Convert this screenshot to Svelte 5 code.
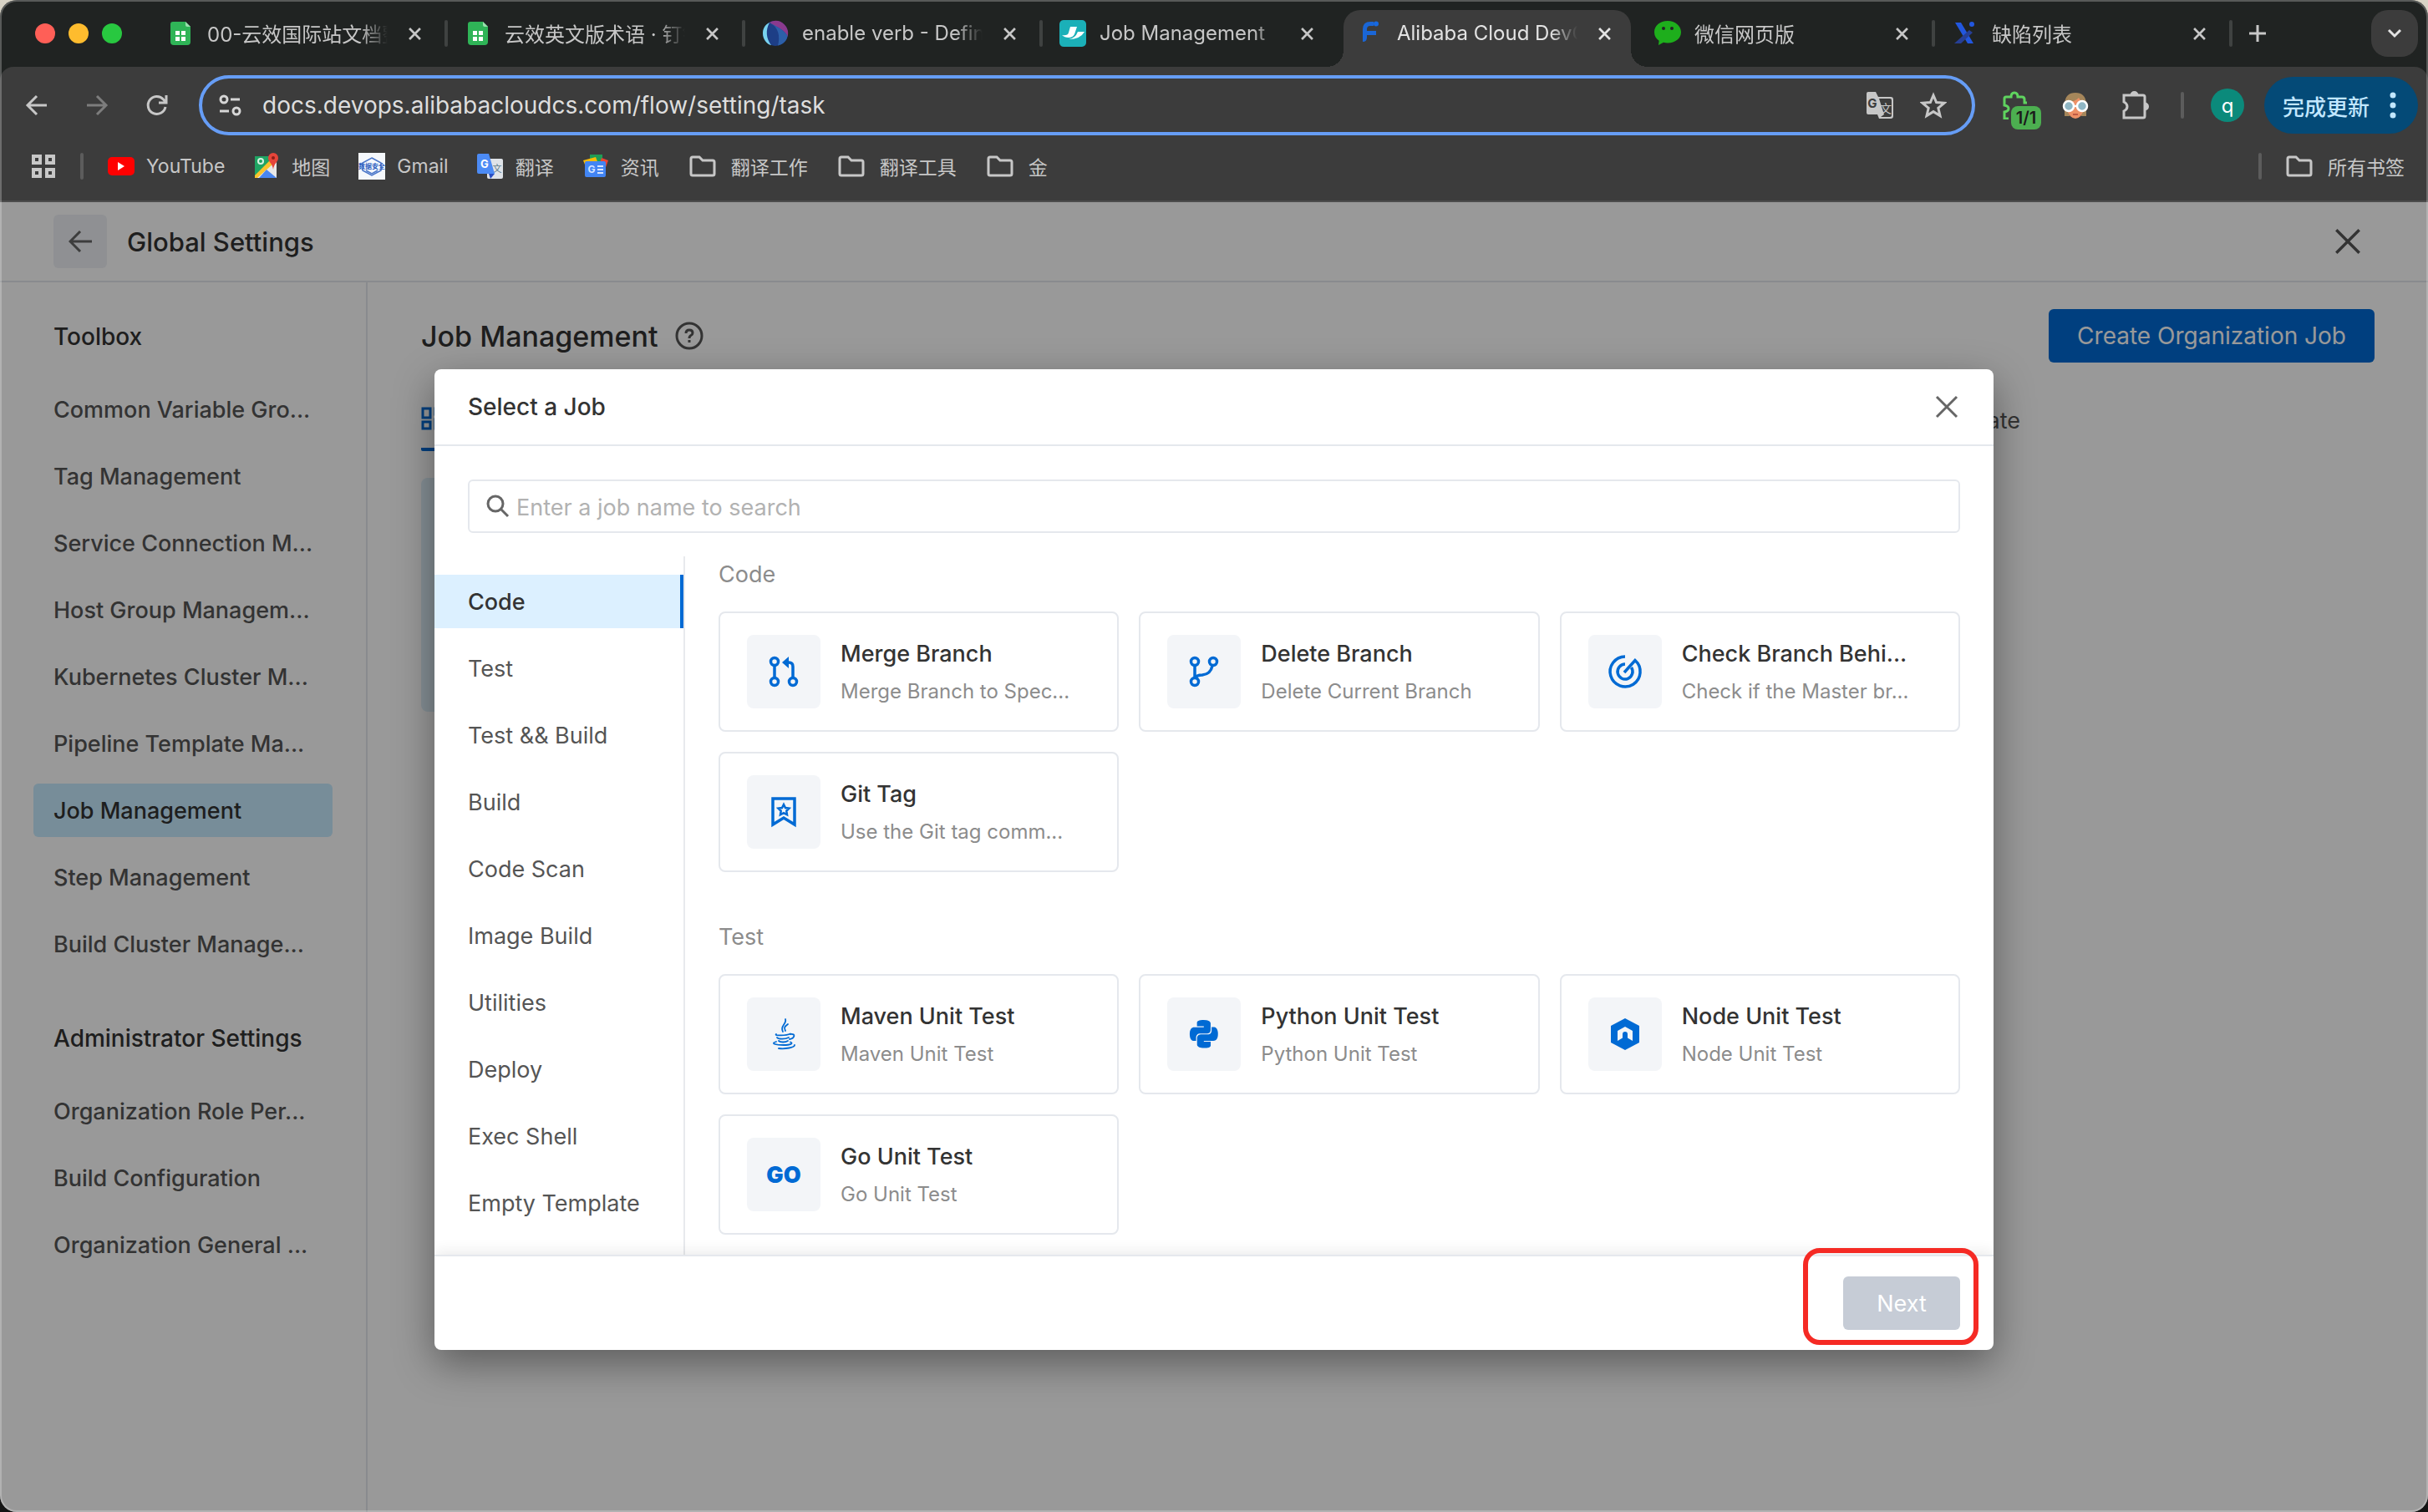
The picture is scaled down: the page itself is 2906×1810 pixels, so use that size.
<script>
  const tabs = [
    { icon: "sheet", title: "00-云效国际站文档整理" },
    { icon: "sheet", title: "云效英文版术语 · 钉钉文档" },
    { icon: "globe", title: "enable verb - Definition" },
    { icon: "teambition", title: "Job Management" },
    { icon: "flow", title: "Alibaba Cloud DevOps", active: true },
    { icon: "wechat", title: "微信网页版" },
    { icon: "xicon", title: "缺陷列表" }
  ]

  const bookmarks = [
    { icon: "youtube", title: "YouTube" },
    { icon: "map", title: "地图" },
    { icon: "badge", title: "Gmail" },
    { icon: "translate", title: "翻译" },
    { icon: "news", title: "资讯" },
    { icon: "folder", title: "翻译工作" },
    { icon: "folder", title: "翻译工具" },
    { icon: "folder", title: "金" }
  ]

  const menu = [
    {
      title: "Toolbox",
      items: [
        "Common Variable Gro...",
        "Tag Management",
        "Service Connection M...",
        "Host Group Managem...",
        "Kubernetes Cluster M...",
        "Pipeline Template Ma...",
        "Job Management",
        "Step Management",
        "Build Cluster Manage..."
      ]
    },
    {
      title: "Administrator Settings",
      items: [
        "Organization Role Per...",
        "Build Configuration",
        "Organization General ..."
      ]
    }
  ]

  const categories = [
    "Code",
    "Test",
    "Test && Build",
    "Build",
    "Code Scan",
    "Image Build",
    "Utilities",
    "Deploy",
    "Exec Shell",
    "Empty Template"
  ]

  const groups = [
    {
      title: "Code",
      jobs: [
        { icon: "merge", name: "Merge Branch", desc: "Merge Branch to Spec..." },
        { icon: "branch", name: "Delete Branch", desc: "Delete Current Branch" },
        { icon: "target", name: "Check Branch Behi...", desc: "Check if the Master br..." },
        { icon: "tag", name: "Git Tag", desc: "Use the Git tag comm..." }
      ]
    },
    {
      title: "Test",
      jobs: [
        { icon: "java", name: "Maven Unit Test", desc: "Maven Unit Test" },
        { icon: "python", name: "Python Unit Test", desc: "Python Unit Test" },
        { icon: "node", name: "Node Unit Test", desc: "Node Unit Test" },
        { icon: "go", name: "Go Unit Test", desc: "Go Unit Test" }
      ]
    }
  ]

  let current = $state("Code")
  let selected = $state(null)
  let search = $state("")
  let url = $state("docs.devops.alibabacloudcs.com/flow/setting/task")
</script>

{#snippet cross(size, width)}
  <svg width={size} height={size} viewBox="0 0 28 28" fill="none" stroke="currentColor" stroke-width={width}>
    <path d="M2 2l24 24M26 2L2 26" />
  </svg>
{/snippet}

{#snippet favicon(name)}
  <svg class="favicon" width="32" height="32" viewBox="0 0 32 32">
    {#if name === "sheet"}
      <path d="M7 2h15l6 6v18a4 4 0 0 1-4 4H8a4 4 0 0 1-4-4V5a3 3 0 0 1 3-3z" fill="#2fb457" />
      <path d="M22 2l6 6h-4a2 2 0 0 1-2-2z" fill="#9be0ae" />
      <path d="M10 13h5v5h-5zM17 13h5v5h-5zM10 20h5v5h-5zM17 20h5v5h-5z" fill="#fff" />
    {:else if name === "globe"}
      <circle cx="16" cy="16" r="15" fill="#1d3e86" />
      <path d="M12 1.5A15 15 0 0 1 30.5 20C28 12 20 10 9 3z" fill="#8a3a8e" />
      <path d="M9 3C20 8 22 20 19 30.5 26 29 30 24 30.5 19 27 12 18 8 9 3z" fill="#2c5fa8" />
      <path d="M9 3C3 6 1 11 1 16c0 7 5 13 10 14.3C5 22 4 12 9 3z" fill="#79d3ee" />
    {:else if name === "teambition"}
      <rect width="32" height="32" rx="5" fill="#1bb0b8" />
      <path d="M13 8h8l-3 9q-2 4-7 4-5 0-8-3 7 1 8-3z" fill="#fff" />
      <path d="M22 14h8q-5 9-19 9 8-1 11-9z" fill="#fff" />
    {:else if name === "flow"}
      <path d="M7 26V11Q7 2 16 2h4v5h-4q-4 0-4 4v2h11v5H12v3q0 5-5 5z" fill="#1a66d6" />
      <circle cx="23" cy="4.5" r="3" fill="#1769e0" />
    {:else if name === "wechat"}
      <path d="M16 1C7 1 0 6.500 0 14.500c0 4.500 2.200 8 5.600 10.200L5 30l6-3.200q2.400.7 5 .7c9 0 16-5.500 16-13S25 1 16 1z" fill="#1eae1c" />
      <circle cx="11" cy="10" r="2" fill="#222624" />
      <circle cx="21" cy="10" r="2" fill="#222624" />
    {:else if name === "xicon"}
      <path d="M4 3h7l15 25h-7z" fill="#2257df" />
      <path d="M21 12l4 3L11 28H3z" fill="#263f95" />
      <circle cx="24" cy="5" r="3" fill="#2257df" />
    {:else if name === "youtube"}
      <rect y="5" width="32" height="22" rx="5" fill="#f00" />
      <path d="M12 11l8 5-8 5z" fill="#fff" />
    {:else if name === "map"}
      <path d="M2 4h22l4 4v22H2z" fill="#1fa463" />
      <path d="M2 30L28 6v24z" fill="#e8e8e8" />
      <path d="M2 27L20 9l4 4L5 30H2z" fill="#fbc32d" />
      <path d="M7 30l9-10 12 10z" fill="#4a86f0" />
      <circle cx="9" cy="10" r="3" fill="none" stroke="#d9f2e2" stroke-width="2" />
      <path d="M24 0a6 6 0 0 1 6 6c0 5-5 6-6 14-1-8-6-9-6-14a6 6 0 0 1 6-6z" fill="#e5453a" />
      <circle cx="24" cy="6" r="2" fill="#8c1f18" />
    {:else if name === "badge"}
      <rect width="32" height="32" fill="#f5f8fc" />
      <path d="M16 6l11 6v9l-11 6-11-6v-9z" fill="none" stroke="#4a76c9" stroke-width="1.5" />
      <path d="M9 21l7 4 7-4" fill="none" stroke="#4a76c9" stroke-width="1.5" />
      <text x="16" y="19" text-anchor="middle" font-size="8" font-weight="700" fill="#2f5fc0">数据安全</text>
    {:else if name === "translate"}
      <rect x="12" y="7" width="19" height="24" rx="2" fill="#dfe3e8" />
      <text x="24" y="23" text-anchor="middle" font-size="11" fill="#5d7b88">文</text>
      <path d="M2 1h12l7 24H2a2 2 0 0 1-2-2V3a2 2 0 0 1 2-2z" fill="#4c8bf5" />
      <path d="M14 25h7l-5 6z" fill="#2a4ec2" />
      <text x="9" y="18" text-anchor="middle" font-size="13" font-weight="700" fill="#fff">G</text>
    {:else if name === "news"}
      <path d="M9 2h15v10H9z" fill="#1f9d55" />
      <path d="M1 9l15-4 3 8-14 6z" fill="#fbbc05" />
      <path d="M23 6l8 3-4 11-8-2z" fill="#ea4335" />
      <rect x="3" y="10" width="25" height="19" rx="2" fill="#4285f4" />
      <text x="11" y="24" text-anchor="middle" font-size="12" font-weight="700" fill="#d7e5ff">G</text>
      <path d="M18 16h7M18 20h7M18 24h7" stroke="#d7e5ff" stroke-width="2" />
    {:else if name === "folder"}
      <path d="M2 7a2 2 0 0 1 2-2h8l4 4h12a2 2 0 0 1 2 2v14a2 2 0 0 1-2 2H4a2 2 0 0 1-2-2z" fill="none" stroke="#c7c7c7" stroke-width="3" />
    {/if}
  </svg>
{/snippet}

{#snippet jobIcon(name)}
  <svg width="36" height="36" viewBox="0 0 36 36" fill="none" stroke="#006ad4" stroke-width="3.5">
    {#if name === "merge"}
      <circle cx="7" cy="6" r="4.5" />
      <circle cx="7" cy="30" r="4.5" />
      <circle cx="29" cy="30" r="4.5" />
      <path d="M7 10v16M29 25V12q0-5-5-5h-2" />
      <path d="M16 7l8-7v14z" fill="#006ad4" stroke="none" />
    {:else if name === "branch"}
      <circle cx="7" cy="6" r="4.5" />
      <circle cx="29" cy="6" r="4.5" />
      <circle cx="7" cy="30" r="4.5" />
      <path d="M7 10v16M28 11q-2 10-12 11-7 0-9 4" />
    {:else if name === "target"}
      <path d="M18 0A18 18 0 1 0 30 4.500L17 19" />
      <path d="M18 9A9 9 0 1 0 25.500 13" />
    {:else if name === "tag"}
      <path d="M5 2h26v31l-13-8-13 8z" />
      <path d="M18 9l2 4 4.500.7-3.200 3.100.7 4.500-4-2.100-4 2.100.7-4.500-3.200-3.100L16 13z" stroke-width="2.5" />
    {:else if name === "java"}
      <g stroke-width="1.8" stroke-linecap="round">
        <path d="M20 0c2 6-7 8-3 15M23 6c-4 3-5 4-3 8" />
        <path d="M9 18c-3 2 12 2 17-.5M10 22c2 2.500 10 2 14 0M12 26c2 2 8 2 11 0M26 18c7-1 5 5-1 6" />
        <path d="M9 27c-7 2-1 4 9 4 8 0 12-2 8-3.500M12 35c8 1 19-1 19-4" />
      </g>
    {:else if name === "python"}
      <g transform="translate(1 1) scale(1.4)" fill="#006ad4" stroke="none">
        <path d="M14.250.18l.9.2.73.26.59.3.45.32.34.34.25.34.16.33.1.3.04.26.02.2-.01.13V8.500l-.05.63-.13.55-.21.46-.26.38-.3.31-.33.25-.35.19-.35.14-.33.1-.3.07-.26.04-.21.02H8.770l-.69.05-.59.14-.5.22-.41.27-.33.32-.27.35-.2.36-.15.37-.1.35-.07.32-.04.27-.02.21v3.060H3.170l-.21-.03-.28-.07-.32-.12-.35-.18-.36-.26-.36-.36-.35-.46-.32-.59-.28-.73-.21-.88-.14-1.050-.05-1.230.06-1.220.16-1.040.24-.87.32-.71.36-.57.4-.44.42-.33.42-.24.4-.16.36-.1.32-.05.24-.01h8.380v-.83H6.180l-.01-2.750-.02-.37.05-.34.11-.31.17-.28.25-.26.31-.23.38-.2.44-.18.51-.15.58-.12.64-.1.71-.06.77-.04.84-.02z" />
        <path d="M21.100 6.110l.28.06.32.12.35.18.36.27.36.35.35.47.32.59.28.73.21.88.14 1.040.05 1.230-.06 1.230-.16 1.040-.24.86-.32.71-.36.57-.4.45-.42.33-.42.24-.4.16-.36.09-.32.05-.24.02h-8.380v.82h5.840l.01 2.760.02.36-.05.34-.11.31-.17.29-.25.25-.31.24-.38.2-.44.17-.51.15-.58.13-.64.09-.71.07-.77.04-.84.01-1.270-.04-1.070-.14-.9-.2-.73-.25-.59-.3-.45-.33-.34-.34-.25-.34-.16-.33-.1-.3-.04-.25-.02-.2.01-.13v-5.340l.05-.64.13-.54.21-.46.26-.38.3-.32.33-.24.35-.2.35-.14.33-.1.3-.06.26-.04.21-.02h5.970l.69-.05.59-.14.5-.21.41-.28.33-.32.27-.35.2-.36.15-.36.1-.35.07-.32.04-.28.02-.21V6.070h2.090z" />
      </g>
    {:else if name === "node"}
      <path d="M18-1l17 9v20l-17 9-17-9V8z" fill="#006ad4" stroke="none" />
      <path d="M9 26V14l9-5 9 5v12l-6-3.500V18q0-3-3-3t-3 3v4.500z" fill="#f3f5f8" stroke="none" />
    {:else if name === "go"}
      <text x="18" y="28" text-anchor="middle" font-size="27" font-weight="900" fill="#006ad4" stroke="none">GO</text>
    {/if}
  </svg>
{/snippet}

<div class="window">
  <header class="browser">
    <div class="strip">
      <div class="lights">
        <span class="light red"></span>
        <span class="light yellow"></span>
        <span class="light green"></span>
      </div>
      {#each tabs as tab, i}
        <div
          class="tab"
          class:active={tab.active}
          class:divided={!tab.active && !(tabs[i + 1] && tabs[i + 1].active)}
        >
          {@render favicon(tab.icon)}
          <span class="tab-title">{tab.title}</span>
          <button class="tab-close" aria-label="Close tab">{@render cross(15, 5)}</button>
        </div>
      {/each}
      <button class="new-tab" aria-label="New tab">
        <svg width="22" height="22" viewBox="0 0 22 22" fill="none" stroke="currentColor" stroke-width="3">
          <path d="M11 1v20M1 11h20" />
        </svg>
      </button>
      <button class="tab-list" aria-label="Search tabs">
        <svg width="18" height="12" viewBox="0 0 18 12" fill="none" stroke="currentColor" stroke-width="3">
          <path d="M2 2l7 7 7-7" />
        </svg>
      </button>
    </div>

    <div class="toolbar">
      <button class="tool" aria-label="Back">
        <svg width="28" height="28" viewBox="0 0 28 28" fill="none" stroke="currentColor" stroke-width="3">
          <path d="M26 14H4M14 3L3 14l11 11" />
        </svg>
      </button>
      <button class="tool dim" aria-label="Forward">
        <svg width="28" height="28" viewBox="0 0 28 28" fill="none" stroke="currentColor" stroke-width="3">
          <path d="M2 14h22M14 3l11 11-11 11" />
        </svg>
      </button>
      <button class="tool" aria-label="Reload">
        <svg width="28" height="28" viewBox="0 0 28 28" fill="none" stroke="currentColor" stroke-width="3">
          <path d="M24 16a10.500 10.500 0 1 1-2.500-9L25 11M25 2v9h-9" />
        </svg>
      </button>
      <div class="omnibox">
        <svg width="28" height="28" viewBox="0 0 28 28" fill="none" stroke="#d6d6d6" stroke-width="3">
          <circle cx="6" cy="7" r="4" />
          <path d="M14 7h11M1 21h11" />
          <circle cx="21" cy="21" r="4" />
        </svg>
        <input class="url" type="text" aria-label="Address" bind:value={url} />
        <button class="inner" aria-label="Translate page">
          <svg width="34" height="34" viewBox="0 0 34 34">
            <path d="M3 1h9l3 6h15a3 3 0 0 1 3 3v20a3 3 0 0 1-3 3H16l-2-5H3a2 2 0 0 1-2-2V3a2 2 0 0 1 2-2z" fill="#c7c7c7" />
            <path d="M16 9h13a2 2 0 0 1 2 2v18a2 2 0 0 1-2 2H18l4-3z" fill="#3c3c3c" />
            <text x="8" y="20" text-anchor="middle" font-size="15" font-weight="700" fill="#3c3c3c">G</text>
            <text x="24" y="26" text-anchor="middle" font-size="14" fill="#c7c7c7">文</text>
          </svg>
        </button>
        <button class="inner" aria-label="Bookmark this page">
          <svg width="32" height="32" viewBox="0 0 32 32" fill="none" stroke="#c7c7c7" stroke-width="3">
            <path d="M16 4l3.600 8.500 9.400.8-7.200 6.100 2.200 9.100-8-4.900-8 4.900 2.200-9.100L3 13.300l9.400-.8z" />
          </svg>
        </button>
      </div>
      <button class="tool puzzle" aria-label="Extension, 1/1">
        <svg width="32" height="34" viewBox="0 0 32 34" fill="none" stroke="#5fd35f" stroke-width="3">
          <path d="M8 33H3v-8q5-1 5-4t-5-4V9q0-2 2-2h6q0-5 4-5t4 5h5q3 0 3 3v4h3" />
        </svg>
        <span class="count">1/1</span>
      </button>
      <button class="tool" aria-label="Profile extension">
        <svg width="32" height="34" viewBox="0 0 32 34">
          <path d="M3 30V15Q4 2 16 2t13 13v15h-6V14H9v16z" fill="#a5865a" />
          <path d="M6 13q10 0 14-5 2 4 6 5v8q-2 11-10 12Q8 32 6 21z" fill="#ee9066" />
          <circle cx="8" cy="18" r="6" fill="#8fb6c4" stroke="#fff" stroke-width="2.5" />
          <circle cx="24" cy="18" r="6" fill="#8fb6c4" stroke="#fff" stroke-width="2.5" />
          <path d="M13 18h6" stroke="#fff" stroke-width="2.5" />
          <path d="M13 28h6" stroke="#c05a44" stroke-width="2" />
        </svg>
      </button>
      <button class="tool" aria-label="Extensions">
        <svg width="34" height="36" viewBox="0 0 34 36" fill="none" stroke="currentColor" stroke-width="3">
          <path d="M3 6h23a2 2 0 0 1 2 2v23a2 2 0 0 1-2 2H3v-8q4-2 4-5.500T3 14z" />
          <path d="M12 6a3.500 3.500 0 0 1 7 0M28 16a3.500 3.500 0 0 1 0 7" fill="currentColor" />
        </svg>
      </button>
      <span class="bar-divider"></span>
      <button class="avatar">q</button>
      <button class="update">
        完成更新
        <svg width="8" height="32" viewBox="0 0 8 32" fill="currentColor">
          <circle cx="4" cy="4" r="3.5" />
          <circle cx="4" cy="16" r="3.5" />
          <circle cx="4" cy="28" r="3.5" />
        </svg>
      </button>
    </div>

    <nav class="bookmarks">
      <button class="apps" aria-label="Apps">
        <svg width="32" height="32" viewBox="0 0 32 32" fill="none" stroke="currentColor" stroke-width="4">
          <path d="M4 4h8v8H4zM20 4h8v8h-8zM4 20h8v8H4zM20 20h8v8h-8z" />
        </svg>
      </button>
      <span class="bar-divider"></span>
      {#each bookmarks as { icon, title }}
        <a class="bookmark" class:folder={icon === "folder"} href="#{title}">
          {@render favicon(icon)}
          {title}
        </a>
      {/each}
      <span class="bar-divider last"></span>
      <a class="bookmark folder" href="#all">
        {@render favicon("folder")}
        所有书签
      </a>
    </nav>
  </header>

  <div class="page">
    <header class="page-header">
      <button class="back" aria-label="Back">
        <svg width="28" height="26" viewBox="0 0 28 26" fill="none" stroke="currentColor" stroke-width="3">
          <path d="M28 13H3M14 1L2 13l12 12" />
        </svg>
      </button>
      <span class="page-name">Global Settings</span>
      <button class="page-close" aria-label="Close settings">{@render cross(32, 3)}</button>
    </header>

    <div class="columns">
      <nav class="sidebar">
        {#each menu as { title, items }}
          <section>
            <h2>{title}</h2>
            <ul>
              {#each items as item}
                <li><a href="#{item}" class:current={item === "Job Management"}>{item}</a></li>
              {/each}
            </ul>
          </section>
        {/each}
      </nav>

      <main>
        <div class="title-row">
          <h1>Job Management</h1>
          <svg width="34" height="34" viewBox="0 0 34 34" fill="none" stroke="#555" stroke-width="3">
            <circle cx="17" cy="17" r="15" />
            <path d="M13 14q0-4 4-4t4 3.500q0 2-2 3t-2 3.500" />
            <path d="M17 22v3" />
          </svg>
          <button class="create">Create Organization Job</button>
        </div>
        <div class="views">
          <span class="view">
            <svg width="28" height="28" viewBox="0 0 28 28" fill="none" stroke="currentColor" stroke-width="3">
              <path d="M2 2h9v11H2zM17 2h9v7h-9zM2 18h9v8H2zM17 15h9v11h-9z" />
            </svg>
          </span>
          <span class="sort">Template</span>
        </div>
        <div class="tiles"><div class="tile"></div></div>
      </main>
    </div>

    <div class="overlay">
      <div class="modal" role="dialog" aria-label="Select a Job">
        <header class="modal-header">
          <h2>Select a Job</h2>
          <button class="modal-close" aria-label="Close dialog">{@render cross(28, 3)}</button>
        </header>
        <label class="search">
          <svg width="28" height="28" viewBox="0 0 28 28" fill="none" stroke="#666" stroke-width="3">
            <circle cx="11" cy="11" r="9" />
            <path d="M17 17l9 9" />
          </svg>
          <input type="text" aria-label="Job name" placeholder="Enter a job name to search" bind:value={search} />
        </label>
        <div class="modal-body">
          <div class="categories">
            {#each categories as category}
              <button class="category" class:chosen={category === current} onclick={() => (current = category)}>
                {category}
              </button>
            {/each}
          </div>
          <div class="groups">
            {#each groups as { title, jobs }}
              <section class="group">
                <h3>{title}</h3>
                <div class="jobs">
                  {#each jobs as job}
                    <button class="job" onclick={() => (selected = job)}>
                      <span class="job-icon">{@render jobIcon(job.icon)}</span>
                      <span class="job-text">
                        <span class="job-name">{job.name}</span>
                        <span class="job-desc">{job.desc}</span>
                      </span>
                    </button>
                  {/each}
                </div>
              </section>
            {/each}
          </div>
        </div>
        <footer class="modal-footer">
          <button class="next" disabled={!selected}>Next</button>
          <span class="mark"></span>
        </footer>
      </div>
    </div>
  </div>
</div>

<style>
  :global(body) {
    background: linear-gradient(#d8d3c6, #141414);
  }
  .window {
    position: relative;
    display: flex;
    flex-direction: column;
    min-height: 100vh;
    border-radius: 20px;
    overflow: hidden;
    font-family: Inter, "Noto Sans CJK SC", sans-serif;
    font-size: 27px;
    color: #333;
  }
  .window::after {
    content: "";
    position: absolute;
    inset: 0;
    border: 2px solid rgba(255, 255, 255, 0.25);
    border-radius: 20px;
    pointer-events: none;
  }
  button {
    display: flex;
    align-items: center;
    justify-content: center;
    padding: 0;
    border: none;
    background: none;
    font: inherit;
    color: inherit;
  }
  a {
    color: inherit;
    text-decoration: none;
  }
  h1, h2, h3, ul {
    margin: 0;
    padding: 0;
    font-weight: 500;
    list-style: none;
  }
  svg {
    flex: none;
    display: block;
  }

  /* browser chrome */
  .browser {
    background: #202322;
    color: #c7c7c7;
    font-size: 24px;
  }
  .strip {
    display: flex;
    align-items: center;
    height: 80px;
    padding-right: 12px;
  }
  .lights {
    display: flex;
    flex: none;
    gap: 16px;
    width: 136px;
    padding-left: 42px;
  }
  .light {
    width: 24px;
    height: 24px;
    border-radius: 50%;
  }
  .red {
    background: #ff5f57;
  }
  .yellow {
    background: #febc2e;
  }
  .green {
    background: #28c840;
  }
  .tab {
    position: relative;
    display: flex;
    flex: 0 1 356px;
    align-items: center;
    gap: 16px;
    box-sizing: border-box;
    min-width: 0;
    height: 80px;
    padding: 0 22px;
  }
  .tab-title {
    flex: 1;
    overflow: hidden;
    padding-bottom: 2px;
    white-space: nowrap;
    -webkit-mask-image: linear-gradient(90deg, #000 85%, transparent);
    mask-image: linear-gradient(90deg, #000 85%, transparent);
  }
  .tab-close {
    width: 32px;
    height: 32px;
  }
  .divided::after {
    content: "";
    position: absolute;
    top: 24px;
    right: -2px;
    width: 4px;
    height: 32px;
    border-radius: 2px;
    background: #3f4241;
  }
  .active {
    color: #e3e3e3;
    z-index: 1;
  }
  .active::before {
    content: "";
    position: absolute;
    z-index: -1;
    inset: 12px 6px 0;
    border-radius: 20px 20px 0 0;
    background: #3c3c3c;
  }
  .active::after {
    content: "";
    position: absolute;
    z-index: -1;
    left: -14px;
    right: -14px;
    bottom: 0;
    height: 20px;
    background:
      radial-gradient(circle at 0 0, transparent 20px, #3c3c3c 20px) left / 20px 20px no-repeat,
      radial-gradient(circle at 100% 0, transparent 20px, #3c3c3c 20px) right / 20px 20px no-repeat;
  }
  .new-tab {
    width: 64px;
    height: 56px;
  }
  .tab-list {
    width: 56px;
    height: 56px;
    margin-left: auto;
    border-radius: 20px;
    background: #3c3c3c;
    color: #e3e3e3;
  }
  .toolbar {
    display: flex;
    align-items: center;
    height: 92px;
    padding: 0 12px 0 8px;
    border-radius: 16px 16px 0 0;
    background: #3c3c3c;
  }
  .tool {
    flex: none;
    width: 72px;
    height: 72px;
  }
  .dim {
    color: #7d7d7d;
  }
  .omnibox {
    display: flex;
    flex: 1;
    align-items: center;
    box-sizing: border-box;
    height: 72px;
    margin: 0 12px 0 14px;
    padding: 0 30px 0 20px;
    border: 4px solid #669df6;
    border-radius: 36px;
  }
  .url {
    flex: 1;
    min-width: 0;
    padding: 0 0 0 24px;
    border: none;
    outline: none;
    background: none;
    font: inherit;
    font-size: 28px;
    color: #dedede;
  }
  .inner {
    margin-left: 31px;
  }
  .puzzle {
    position: relative;
  }
  .count {
    position: absolute;
    right: 5px;
    bottom: 7px;
    width: 36px;
    border-radius: 8px;
    background: #4caf50;
    font-size: 20px;
    font-weight: 600;
    line-height: 28px;
    color: #1b1b1b;
  }
  .bar-divider {
    flex: none;
    width: 4px;
    height: 32px;
    border-radius: 2px;
    background: #5c5c5c;
  }
  .toolbar .bar-divider {
    margin-left: 18px;
  }
  .avatar {
    flex: none;
    width: 40px;
    height: 40px;
    margin: 0 24px 0 32px;
    border-radius: 50%;
    background: #0b8a7b;
    color: #fff;
  }
  .update {
    flex: none;
    gap: 24px;
    height: 68px;
    padding: 0 26px 0 22px;
    border-radius: 34px;
    background: #044a77;
    font-size: 26px;
    font-weight: 500;
    color: #c2e7ff;
  }
  .bookmarks {
    display: flex;
    align-items: center;
    height: 54px;
    padding: 0 28px 14px 36px;
    border-bottom: 2px solid #4c4c4c;
    background: #3c3c3c;
    font-size: 23px;
  }
  .apps {
    margin-right: 28px;
  }
  .bookmark {
    display: flex;
    align-items: center;
    gap: 14px;
    margin-left: 34px;
    white-space: nowrap;
  }
  .folder {
    gap: 18px;
    margin-left: 36px;
  }
  .bar-divider + .bookmark {
    margin-left: 29px;
  }
  .last {
    margin-left: auto;
  }

  /* settings page */
  .page {
    position: relative;
    display: flex;
    flex: 1;
    flex-direction: column;
    background: #fff;
  }
  .page-header {
    display: flex;
    align-items: center;
    height: 94px;
    padding: 0 64px;
    border-bottom: 2px solid #e5e8ed;
  }
  .back {
    width: 64px;
    height: 64px;
    border-radius: 6px;
    background: #eef1f5;
    color: #666;
  }
  .page-name {
    margin-left: 24px;
    font-size: 31px;
    font-weight: 500;
  }
  .page-close {
    width: 64px;
    height: 64px;
    margin-left: auto;
    color: #555;
  }
  .columns {
    display: flex;
    flex: 1;
  }
  .sidebar {
    display: flex;
    flex: none;
    flex-direction: column;
    gap: 48px;
    box-sizing: border-box;
    width: 440px;
    padding: 32px 40px;
    border-right: 2px solid #e5e8ed;
  }
  .sidebar h2 {
    height: 64px;
    margin-bottom: 24px;
    padding-left: 24px;
    font-size: 28px;
    line-height: 66px;
  }
  .sidebar ul {
    display: flex;
    flex-direction: column;
    gap: 16px;
  }
  .sidebar a {
    display: block;
    height: 64px;
    padding-left: 24px;
    border-radius: 6px;
    line-height: 66px;
    white-space: nowrap;
    color: #555;
  }
  .sidebar .current {
    background: #c6ebff;
    font-weight: 500;
    color: #333;
  }
  main {
    flex: 1;
    padding: 32px 64px;
  }
  .title-row {
    display: flex;
    align-items: center;
    gap: 20px;
    height: 64px;
  }
  h1 {
    font-size: 34px;
  }
  .create {
    height: 64px;
    margin-left: auto;
    padding: 0 34px;
    border-radius: 6px;
    background: #006ad4;
    font-size: 28px;
    color: #fff;
  }
  .views {
    display: flex;
    justify-content: space-between;
    height: 74px;
    margin-top: 32px;
    padding-right: 424px;
    line-height: 76px;
    color: #555;
  }
  .view {
    display: flex;
    align-items: center;
    box-sizing: border-box;
    width: 240px;
    border-bottom: 4px solid #006ad4;
    border-radius: 2px;
    color: #006ad4;
  }
  .tiles {
    display: grid;
    grid-template-columns: repeat(4, 1fr);
    gap: 24px;
    margin-top: 32px;
  }
  .tile {
    height: 280px;
    border-radius: 8px;
    background: #dff0fb;
  }

  /* job picker */
  .overlay {
    position: absolute;
    inset: 0;
    background: rgba(0, 0, 0, 0.4);
  }
  .modal {
    margin: 200px 520px 0;
    border-radius: 8px;
    overflow: hidden;
    background: #fff;
    box-shadow: 0 16px 48px rgba(0, 0, 0, 0.4);
  }
  .modal-header {
    display: flex;
    align-items: center;
    justify-content: space-between;
    height: 90px;
    padding: 0 24px 0 40px;
    border-bottom: 2px solid #e5e8ed;
  }
  .modal-header h2 {
    font-size: 28px;
  }
  .modal-close {
    width: 64px;
    height: 64px;
    color: #666;
  }
  .search {
    display: flex;
    align-items: center;
    gap: 8px;
    box-sizing: border-box;
    height: 64px;
    margin: 40px 40px 28px;
    padding: 0 20px;
    border: 2px solid #e5e8ed;
    border-radius: 6px;
  }
  .search input {
    flex: 1;
    padding: 2px 0 0;
    border: none;
    outline: none;
    font: inherit;
    color: #333;
  }
  .search input::placeholder {
    color: #b2b2b2;
  }
  .modal-body {
    display: flex;
  }
  .categories {
    display: flex;
    flex: none;
    flex-direction: column;
    gap: 16px;
    box-sizing: border-box;
    width: 300px;
    padding: 22px 0 30px;
    border-right: 2px solid #e8eaed;
  }
  .category {
    justify-content: flex-start;
    height: 64px;
    padding-left: 40px;
    border-right: 4px solid transparent;
    color: #555;
  }
  .chosen {
    border-color: #006ad4;
    background: #dcf0ff;
    font-weight: 500;
    color: #333;
  }
  .groups {
    display: flex;
    flex: 1;
    flex-direction: column;
    gap: 56px;
    padding: 0 40px 24px;
  }
  h3 {
    margin-bottom: 22px;
    font-size: 27px;
    font-weight: 400;
    line-height: 44px;
    color: #8c8c8c;
  }
  .jobs {
    display: grid;
    grid-template-columns: repeat(3, 1fr);
    gap: 24px;
  }
  .job {
    gap: 24px;
    justify-content: flex-start;
    height: 144px;
    padding: 0 32px;
    border: 2px solid #e5e8ed;
    border-radius: 8px;
    text-align: left;
    white-space: nowrap;
  }
  .job-icon {
    display: flex;
    flex: none;
    align-items: center;
    justify-content: center;
    width: 88px;
    height: 88px;
    border-radius: 8px;
    background: #f3f5f8;
  }
  .job-icon svg {
    overflow: visible;
  }
  .job-text {
    display: flex;
    flex-direction: column;
    padding-top: 2px;
  }
  .job-name {
    font-weight: 500;
    line-height: 46px;
  }
  .job-desc {
    font-size: 24px;
    line-height: 44px;
    color: #8c8c8c;
  }
  .modal-footer {
    position: relative;
    display: flex;
    justify-content: flex-end;
    padding: 24px 40px;
    border-top: 2px solid #e5e8ed;
    box-shadow: 0 -4px 16px rgba(0, 0, 0, 0.08);
  }
  .next {
    width: 140px;
    height: 64px;
    border-radius: 6px;
    background: #c6ccd6;
    color: #fff;
  }
  .mark {
    position: absolute;
    right: 18px;
    bottom: 6px;
    box-sizing: border-box;
    width: 210px;
    height: 116px;
    border: 6px solid #f52a24;
    border-radius: 20px;
    pointer-events: none;
  }
</style>
